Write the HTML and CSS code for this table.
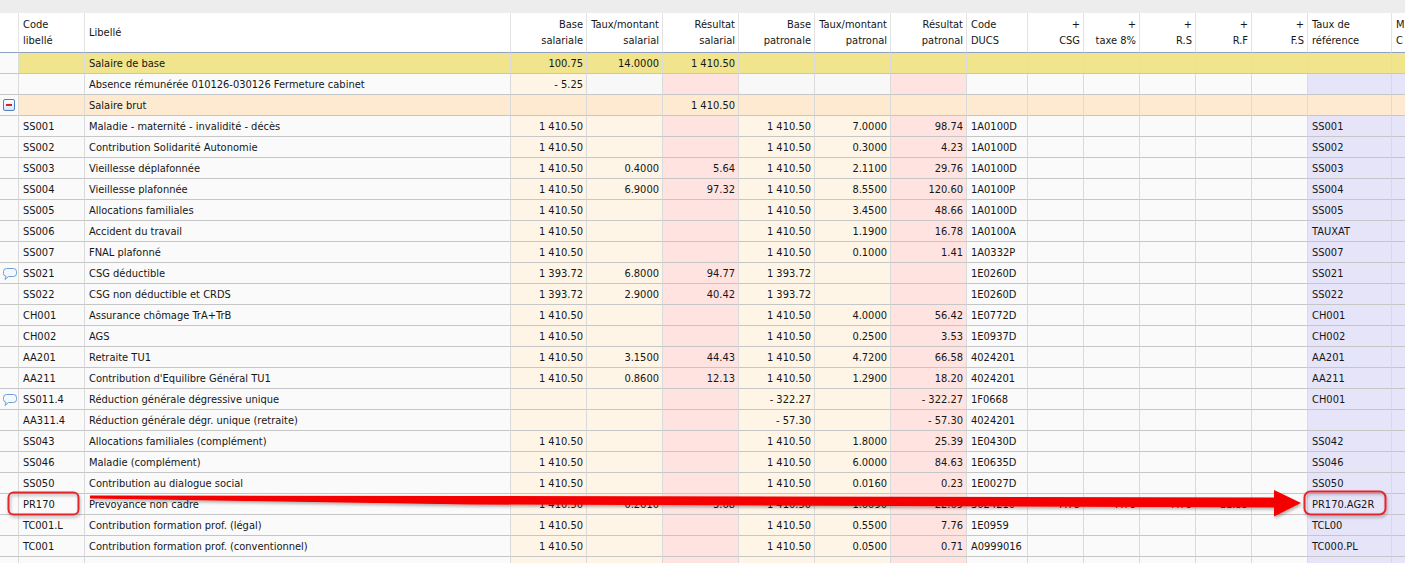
FILE: index.html
```html
<!DOCTYPE html>
<html lang="fr">
<head>
<meta charset="utf-8">
<title>Bulletin</title>
<link rel="stylesheet" href="styles.css">
</head>
<body>
<div class="page">
  <div class="topbar"></div>
  <table class="grid">
    <colgroup>
      <col class="w-ic">
      <col class="w-code">
      <col class="w-lib">
      <col class="w-num cream">
      <col class="w-num cream">
      <col class="w-num pink">
      <col class="w-num cream">
      <col class="w-num cream">
      <col class="w-num pink">
      <col class="w-ducs">
      <col class="w-sm">
      <col class="w-sm">
      <col class="w-sm">
      <col class="w-sm">
      <col class="w-sm">
      <col class="w-ref lav">
      <col class="w-m lav">
    </colgroup>
    <thead>
      <tr>
        <th></th>
        <th>Code<br>libellé</th>
        <th>Libellé</th>
        <th class="n">Base<br>salariale</th>
        <th class="n">Taux/montant<br>salarial</th>
        <th class="n">Résultat<br>salarial</th>
        <th class="n">Base<br>patronale</th>
        <th class="n">Taux/montant<br>patronal</th>
        <th class="n">Résultat<br>patronal</th>
        <th>Code<br>DUCS</th>
        <th class="n">+<br>CSG</th>
        <th class="n">+<br>taxe 8%</th>
        <th class="n">+<br>R.S</th>
        <th class="n">+<br>R.F</th>
        <th class="n">+<br>F.S</th>
        <th>Taux de<br>référence</th>
        <th>M<br>C</th>
      </tr>
    </thead>
    <tbody>
      <tr class="yellow">
        <td class="ic"></td><td></td><td>Salaire de base</td>
        <td class="n">100.75</td><td class="n">14.0000</td><td class="n">1 410.50</td>
        <td class="n"></td><td class="n"></td><td class="n"></td><td></td>
        <td></td><td></td><td></td><td></td><td></td><td></td><td></td>
      </tr>
      <tr>
        <td class="ic"></td><td></td><td>Absence rémunérée 010126-030126 Fermeture cabinet</td>
        <td class="n">- 5.25</td><td class="n plain"></td><td class="n"></td>
        <td class="n plain"></td><td class="n plain"></td><td class="n"></td><td></td>
        <td></td><td></td><td></td><td></td><td></td><td></td><td></td>
      </tr>
      <tr class="orange">
        <td class="ic"><span class="minus"></span></td><td></td><td>Salaire brut</td>
        <td class="n"></td><td class="n"></td><td class="n">1 410.50</td>
        <td class="n"></td><td class="n"></td><td class="n"></td><td></td>
        <td></td><td></td><td></td><td></td><td></td><td></td><td></td>
      </tr>
      <tr>
        <td class="ic"></td><td>SS001</td><td>Maladie - maternité - invalidité - décès</td>
        <td class="n">1 410.50</td><td class="n"></td><td class="n"></td>
        <td class="n">1 410.50</td><td class="n">7.0000</td><td class="n">98.74</td><td>1A0100D</td>
        <td></td><td></td><td></td><td></td><td></td><td>SS001</td><td></td>
      </tr>
      <tr>
        <td class="ic"></td><td>SS002</td><td>Contribution Solidarité Autonomie</td>
        <td class="n">1 410.50</td><td class="n"></td><td class="n"></td>
        <td class="n">1 410.50</td><td class="n">0.3000</td><td class="n">4.23</td><td>1A0100D</td>
        <td></td><td></td><td></td><td></td><td></td><td>SS002</td><td></td>
      </tr>
      <tr>
        <td class="ic"></td><td>SS003</td><td>Vieillesse déplafonnée</td>
        <td class="n">1 410.50</td><td class="n">0.4000</td><td class="n">5.64</td>
        <td class="n">1 410.50</td><td class="n">2.1100</td><td class="n">29.76</td><td>1A0100D</td>
        <td></td><td></td><td></td><td></td><td></td><td>SS003</td><td></td>
      </tr>
      <tr>
        <td class="ic"></td><td>SS004</td><td>Vieillesse plafonnée</td>
        <td class="n">1 410.50</td><td class="n">6.9000</td><td class="n">97.32</td>
        <td class="n">1 410.50</td><td class="n">8.5500</td><td class="n">120.60</td><td>1A0100P</td>
        <td></td><td></td><td></td><td></td><td></td><td>SS004</td><td></td>
      </tr>
      <tr>
        <td class="ic"></td><td>SS005</td><td>Allocations familiales</td>
        <td class="n">1 410.50</td><td class="n"></td><td class="n"></td>
        <td class="n">1 410.50</td><td class="n">3.4500</td><td class="n">48.66</td><td>1A0100D</td>
        <td></td><td></td><td></td><td></td><td></td><td>SS005</td><td></td>
      </tr>
      <tr>
        <td class="ic"></td><td>SS006</td><td>Accident du travail</td>
        <td class="n">1 410.50</td><td class="n"></td><td class="n"></td>
        <td class="n">1 410.50</td><td class="n">1.1900</td><td class="n">16.78</td><td>1A0100A</td>
        <td></td><td></td><td></td><td></td><td></td><td>TAUXAT</td><td></td>
      </tr>
      <tr>
        <td class="ic"></td><td>SS007</td><td>FNAL plafonné</td>
        <td class="n">1 410.50</td><td class="n"></td><td class="n"></td>
        <td class="n">1 410.50</td><td class="n">0.1000</td><td class="n">1.41</td><td>1A0332P</td>
        <td></td><td></td><td></td><td></td><td></td><td>SS007</td><td></td>
      </tr>
      <tr>
        <td class="ic"><svg class="bubble" viewBox="0 0 14 12" width="14" height="12"><path d="M3.5 0.5 H10.5 Q13.5 0.5 13.5 3.5 V5.5 Q13.5 8.5 10.5 8.5 H5.5 L2 11.5 L3 8.4 Q0.5 8 0.5 5.5 V3.5 Q0.5 0.5 3.5 0.5 Z" fill="#f4f8fd" stroke="#6e9fd2" stroke-width="1"/></svg></td>
        <td>SS021</td><td>CSG déductible</td>
        <td class="n">1 393.72</td><td class="n">6.8000</td><td class="n">94.77</td>
        <td class="n">1 393.72</td><td class="n"></td><td class="n"></td><td>1E0260D</td>
        <td></td><td></td><td></td><td></td><td></td><td>SS021</td><td></td>
      </tr>
      <tr>
        <td class="ic"></td><td>SS022</td><td>CSG non déductible et CRDS</td>
        <td class="n">1 393.72</td><td class="n">2.9000</td><td class="n">40.42</td>
        <td class="n">1 393.72</td><td class="n"></td><td class="n"></td><td>1E0260D</td>
        <td></td><td></td><td></td><td></td><td></td><td>SS022</td><td></td>
      </tr>
      <tr>
        <td class="ic"></td><td>CH001</td><td>Assurance chômage TrA+TrB</td>
        <td class="n">1 410.50</td><td class="n"></td><td class="n"></td>
        <td class="n">1 410.50</td><td class="n">4.0000</td><td class="n">56.42</td><td>1E0772D</td>
        <td></td><td></td><td></td><td></td><td></td><td>CH001</td><td></td>
      </tr>
      <tr>
        <td class="ic"></td><td>CH002</td><td>AGS</td>
        <td class="n">1 410.50</td><td class="n"></td><td class="n"></td>
        <td class="n">1 410.50</td><td class="n">0.2500</td><td class="n">3.53</td><td>1E0937D</td>
        <td></td><td></td><td></td><td></td><td></td><td>CH002</td><td></td>
      </tr>
      <tr>
        <td class="ic"></td><td>AA201</td><td>Retraite TU1</td>
        <td class="n">1 410.50</td><td class="n">3.1500</td><td class="n">44.43</td>
        <td class="n">1 410.50</td><td class="n">4.7200</td><td class="n">66.58</td><td>4024201</td>
        <td></td><td></td><td></td><td></td><td></td><td>AA201</td><td></td>
      </tr>
      <tr>
        <td class="ic"></td><td>AA211</td><td>Contribution d'Equilibre Général TU1</td>
        <td class="n">1 410.50</td><td class="n">0.8600</td><td class="n">12.13</td>
        <td class="n">1 410.50</td><td class="n">1.2900</td><td class="n">18.20</td><td>4024201</td>
        <td></td><td></td><td></td><td></td><td></td><td>AA211</td><td></td>
      </tr>
      <tr>
        <td class="ic"><svg class="bubble" viewBox="0 0 14 12" width="14" height="12"><path d="M3.5 0.5 H10.5 Q13.5 0.5 13.5 3.5 V5.5 Q13.5 8.5 10.5 8.5 H5.5 L2 11.5 L3 8.4 Q0.5 8 0.5 5.5 V3.5 Q0.5 0.5 3.5 0.5 Z" fill="#f4f8fd" stroke="#6e9fd2" stroke-width="1"/></svg></td>
        <td>SS011.4</td><td>Réduction générale dégressive unique</td>
        <td class="n"></td><td class="n"></td><td class="n"></td>
        <td class="n">- 322.27</td><td class="n"></td><td class="n">- 322.27</td><td>1F0668</td>
        <td></td><td></td><td></td><td></td><td></td><td>CH001</td><td></td>
      </tr>
      <tr>
        <td class="ic"></td><td>AA311.4</td><td>Réduction générale dégr. unique (retraite)</td>
        <td class="n"></td><td class="n"></td><td class="n"></td>
        <td class="n">- 57.30</td><td class="n"></td><td class="n">- 57.30</td><td>4024201</td>
        <td></td><td></td><td></td><td></td><td></td><td></td><td></td>
      </tr>
      <tr>
        <td class="ic"></td><td>SS043</td><td>Allocations familiales (complément)</td>
        <td class="n">1 410.50</td><td class="n"></td><td class="n"></td>
        <td class="n">1 410.50</td><td class="n">1.8000</td><td class="n">25.39</td><td>1E0430D</td>
        <td></td><td></td><td></td><td></td><td></td><td>SS042</td><td></td>
      </tr>
      <tr>
        <td class="ic"></td><td>SS046</td><td>Maladie (complément)</td>
        <td class="n">1 410.50</td><td class="n"></td><td class="n"></td>
        <td class="n">1 410.50</td><td class="n">6.0000</td><td class="n">84.63</td><td>1E0635D</td>
        <td></td><td></td><td></td><td></td><td></td><td>SS046</td><td></td>
      </tr>
      <tr>
        <td class="ic"></td><td>SS050</td><td>Contribution au dialogue social</td>
        <td class="n">1 410.50</td><td class="n"></td><td class="n"></td>
        <td class="n">1 410.50</td><td class="n">0.0160</td><td class="n">0.23</td><td>1E0027D</td>
        <td></td><td></td><td></td><td></td><td></td><td>SS050</td><td></td>
      </tr>
      <tr>
        <td class="ic"></td><td>PR170</td><td>Prevoyance non cadre</td>
        <td class="n">1 410.50</td><td class="n">0.2610</td><td class="n">3.68</td>
        <td class="n">1 410.50</td><td class="n">1.6090</td><td class="n">22.69</td><td>3024210</td>
        <td class="n">7.78</td><td class="n">7.78</td><td class="n">7.78</td><td class="n">11.35</td><td></td><td>PR170.AG2R</td><td></td>
      </tr>
      <tr>
        <td class="ic"></td><td>TC001.L</td><td>Contribution formation prof. (légal)</td>
        <td class="n">1 410.50</td><td class="n"></td><td class="n"></td>
        <td class="n">1 410.50</td><td class="n">0.5500</td><td class="n">7.76</td><td>1E0959</td>
        <td></td><td></td><td></td><td></td><td></td><td>TCL00</td><td></td>
      </tr>
      <tr>
        <td class="ic"></td><td>TC001</td><td>Contribution formation prof. (conventionnel)</td>
        <td class="n">1 410.50</td><td class="n"></td><td class="n"></td>
        <td class="n">1 410.50</td><td class="n">0.0500</td><td class="n">0.71</td><td>A0999016</td>
        <td></td><td></td><td></td><td></td><td></td><td>TC000.PL</td><td></td>
      </tr>
      <tr>
        <td class="ic"></td><td></td><td></td>
        <td class="n"></td><td class="n"></td><td class="n"></td>
        <td class="n"></td><td class="n"></td><td class="n"></td><td></td>
        <td></td><td></td><td></td><td></td><td></td><td></td><td></td>
      </tr>
    </tbody>
  </table>

  <svg class="overlay" width="1405" height="563" viewBox="0 0 1405 563" aria-hidden="true">
    <defs>
      <filter id="sh" x="-5%" y="-50%" width="110%" height="250%">
        <feDropShadow dx="1" dy="2" stdDeviation="1.6" flood-color="#000" flood-opacity="0.3"/>
      </filter>
    </defs>
    <rect x="8.5" y="492.5" width="70" height="22" rx="5" fill="none" stroke="#e5262b" stroke-width="2" filter="url(#sh)"/>
    <rect x="1304.5" y="491.5" width="81" height="23" rx="6" fill="none" stroke="#e5262b" stroke-width="2" filter="url(#sh)"/>
    <polygon points="90,495.5 470,496 1274,497.5 1274,490 1301,503 1274,516.5 1274,507.5 470,504.5 90,498.5" fill="#f50000" filter="url(#sh)"/>
  </svg>
</div>
</body>
</html>
```

FILE: styles.css
```css
* { box-sizing: border-box; }

html, body {
  margin: 0;
  padding: 0;
  background: #ffffff;
  overflow: hidden;
}

.page {
  position: relative;
  width: 1405px;
  height: 563px;
  overflow: hidden;
  font-family: "DejaVu Sans Condensed", "DejaVu Sans", sans-serif;
  font-stretch: condensed;
  font-size: 11px;
  color: #161616;
}

.topbar {
  height: 13px;
  background: #ededed;
}

.grid {
  table-layout: fixed;
  border-collapse: separate;
  border-spacing: 0;
  width: 1452px;
  background: #fafafa;
}

.w-ic { width: 19px; }
.w-code { width: 66px; }
.w-lib { width: 426px; }
.w-num { width: 76px; }
.w-ducs { width: 61px; }
.w-sm { width: 56px; }
.w-ref { width: 84px; }
.w-m { width: 60px; }

.cream { background: #fff5e7; }
.pink { background: #ffe3e1; }
.lav { background: #e6e4f8; }

.grid th {
  background: #ffffff;
  font-weight: normal;
  text-align: left;
  vertical-align: middle;
  line-height: 16px;
  height: 40px;
  padding: 1px 3px 0 4px;
  border-right: 1px solid #e3e3e3;
  border-bottom: 1px solid #8fa0c4;
  white-space: nowrap;
  overflow: hidden;
}

.grid th.n {
  text-align: right;
  overflow: visible;
}

.grid td {
  height: 21px;
  padding: 1px 3px 0 4px;
  line-height: 19px;
  border-right: 1px solid #dadada;
  border-bottom: 1px solid #c6c6c6;
  white-space: nowrap;
  overflow: hidden;
  vertical-align: middle;
}

.grid td.n { text-align: right; }

.grid td.ic {
  background: #fafafa;
  padding: 0;
  text-align: center;
}

.grid td.plain { background: #f8f8f8; }

.yellow { background: #f0e48c; }
.orange { background: #fdead0; }

.minus {
  display: block;
  width: 12px;
  height: 12px;
  margin: 0 0 0 3px;
  border: 1px solid #4f7fbf;
  border-radius: 2px;
  background: linear-gradient(#ffffff, #d6e4f5);
  position: relative;
}

.minus::after {
  content: "";
  position: absolute;
  left: 2px;
  right: 2px;
  top: 4px;
  height: 2px;
  background: #d3212f;
}

.bubble {
  display: block;
  margin: 1px 0 0 3px;
}

.overlay {
  position: absolute;
  left: 0;
  top: 0;
  pointer-events: none;
}
```
